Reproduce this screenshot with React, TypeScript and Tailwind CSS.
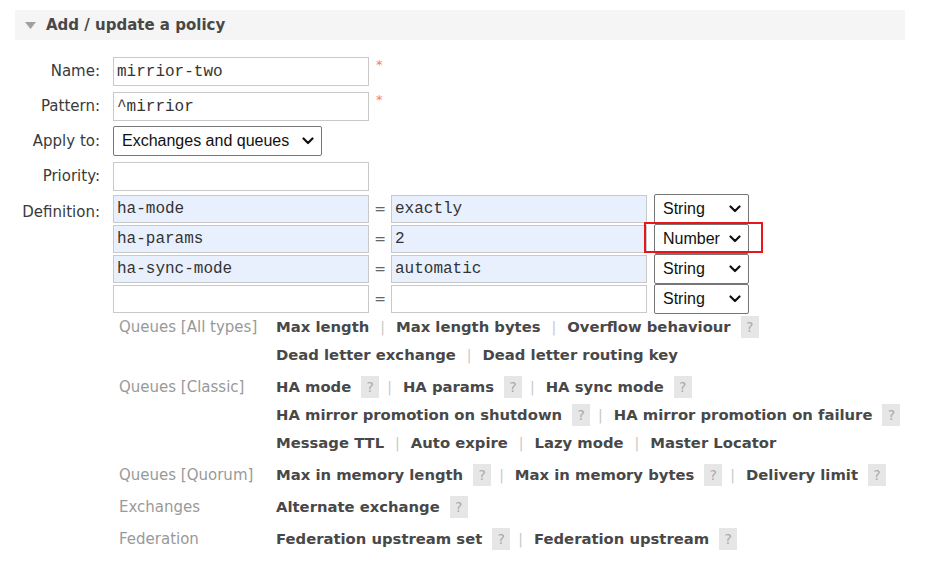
import React from "react";

const sans = { fontFamily: '"DejaVu Sans", Verdana, sans-serif' };

function Chevron() {
  return (
    <svg width="12" height="8" viewBox="0 0 12 8" className="absolute right-[7px] top-1/2 -translate-y-1/2 pointer-events-none">
      <path d="M1.5 1.5 L6 6 L10.5 1.5" fill="none" stroke="#111" strokeWidth="2.2" strokeLinecap="round" strokeLinejoin="round" />
    </svg>
  );
}

function Select({ value, w, h }: { value: string; w: string; h: string }) {
  return (
    <div className={`relative ${w} ${h} border border-[#767676] rounded-[2px] bg-white flex items-center pl-[8px] text-[16px] text-[#111] font-['Liberation_Sans',Arial,sans-serif]`}>
      <span>{value}</span>
      <Chevron />
    </div>
  );
}

function TextInput({ value, blue, w }: { value: string; blue?: boolean; w: string }) {
  return (
    <div
      className={`${w} h-full border border-[#c9c9c9] ${blue ? "bg-[#e8f0fe]" : "bg-white"} flex items-center pl-[3px] text-[16px] text-[#333] font-['Liberation_Mono','Courier_New',monospace]`}
    >
      {value}
    </div>
  );
}

function Label({ children }: { children: React.ReactNode }) {
  return <div className="w-[100px] shrink-0 text-right text-[15px] text-[#3a3a3a]" style={sans}>{children}</div>;
}

function Q() {
  return (
    <span className="inline-flex items-center justify-center w-[18px] h-[22px] bg-[#e6e6e6] text-[#aaa] text-[14px] font-normal ml-[10px] mr-[-3px]">?</span>
  );
}

function Sep() {
  return <span className="text-[#c8c8c8] font-normal text-[14px] mx-[11px]">|</span>;
}

type Item = { t: string; q?: boolean };

function HelpLine({ items }: { items: Item[] }) {
  return (
    <div className="h-[28px] flex items-center whitespace-nowrap">
      {items.map((it, i) => (
        <React.Fragment key={i}>
          {i > 0 && <Sep />}
          <span className="font-bold text-[#484848]">{it.t}</span>
          {it.q && <Q />}
        </React.Fragment>
      ))}
    </div>
  );
}

function HelpGroup({ label, lines }: { label: string; lines: Item[][] }) {
  return (
    <div className="flex pb-[4px]">
      <div className="w-[157px] shrink-0 h-[28px] flex items-center text-[#999] text-[15px]">{label}</div>
      <div className="flex flex-col text-[14.8px]">
        {lines.map((l, i) => (
          <HelpLine key={i} items={l} />
        ))}
      </div>
    </div>
  );
}

export default function App() {
  const defs = [
    { k: "ha-mode", v: "exactly", t: "String", blue: true },
    { k: "ha-params", v: "2", t: "Number", blue: true, red: true },
    { k: "ha-sync-mode", v: "automatic", t: "String", blue: true },
    { k: "", v: "", t: "String", blue: false },
  ];
  return (
    <div className="w-[934px] h-[564px] bg-white overflow-hidden" style={sans}>
      <div className="pt-[10px] pl-[15px]">
        <div className="w-[890px] h-[30px] bg-[#f5f5f5] flex items-center pl-[10px]">
          <svg width="11" height="7" viewBox="0 0 11 7" className="mr-[10px]">
            <path d="M0 0 L11 0 L5.5 7 Z" fill="#a0a0a0" />
          </svg>
          <span className="font-bold text-[15px] text-[#484848]">Add / update a policy</span>
        </div>
      </div>

      <div className="mt-[17px]">
        {/* Name */}
        <div className="flex items-center h-[29px]">
          <Label>Name:</Label>
          <div className="ml-[13px] h-full flex items-start">
            <TextInput value="mirrior-two" blue={false} w="w-[256px]" />
            <span className="text-[#f47a7a] text-[13px] ml-[7px] mt-[1px] leading-none">*</span>
          </div>
        </div>
        {/* Pattern */}
        <div className="flex items-center h-[29px] mt-[6px]">
          <Label>Pattern:</Label>
          <div className="ml-[13px] h-full flex items-start">
            <TextInput value="^mirrior" w="w-[256px]" />
            <span className="text-[#f47a7a] text-[13px] ml-[7px] mt-[1px] leading-none">*</span>
          </div>
        </div>
        {/* Apply to */}
        <div className="flex items-center h-[30px] mt-[5px]">
          <Label>Apply to:</Label>
          <div className="ml-[13px]">
            <Select value="Exchanges and queues" w="w-[209px]" h="h-[30px]" />
          </div>
        </div>
        {/* Priority */}
        <div className="flex items-center h-[29px] mt-[6px]">
          <Label>Priority:</Label>
          <div className="ml-[13px] h-full">
            <TextInput value="" w="w-[256px]" />
          </div>
        </div>
        {/* Definition */}
        <div className="flex mt-[4px]">
          <div className="h-[34px] flex items-center">
            <Label>Definition:</Label>
          </div>
          <div className="ml-[13px] flex flex-col gap-[2px]">
            {defs.map((d, i) => (
              <div key={i} className="flex items-center h-[28px]">
                <TextInput value={d.k} blue={d.blue} w="w-[256px]" />
                <span className="w-[22px] text-center text-[#666] text-[14px]">=</span>
                <TextInput value={d.v} blue={d.blue} w="w-[256px]" />
                <div className="relative ml-[7px]">
                  <Select value={d.t} w="w-[95px]" h="h-[30px]" />
                  {d.red && (
                    <div className="absolute left-[-10px] top-[-2px] w-[119px] h-[31px] border-2 border-[#e8151b] pointer-events-none" />
                  )}
                </div>
              </div>
            ))}
          </div>
        </div>

        {/* Help */}
        <div className="pl-[119px]">
          <HelpGroup
            label="Queues [All types]"
            lines={[
              [{ t: "Max length" }, { t: "Max length bytes" }, { t: "Overflow behaviour", q: true }],
              [{ t: "Dead letter exchange" }, { t: "Dead letter routing key" }],
            ]}
          />
          <HelpGroup
            label="Queues [Classic]"
            lines={[
              [{ t: "HA mode", q: true }, { t: "HA params", q: true }, { t: "HA sync mode", q: true }],
              [{ t: "HA mirror promotion on shutdown", q: true }, { t: "HA mirror promotion on failure", q: true }],
              [{ t: "Message TTL" }, { t: "Auto expire" }, { t: "Lazy mode" }, { t: "Master Locator" }],
            ]}
          />
          <HelpGroup
            label="Queues [Quorum]"
            lines={[[{ t: "Max in memory length", q: true }, { t: "Max in memory bytes", q: true }, { t: "Delivery limit", q: true }]]}
          />
          <HelpGroup label="Exchanges" lines={[[{ t: "Alternate exchange", q: true }]]} />
          <HelpGroup
            label="Federation"
            lines={[[{ t: "Federation upstream set", q: true }, { t: "Federation upstream", q: true }]]}
          />
        </div>
      </div>
    </div>
  );
}
